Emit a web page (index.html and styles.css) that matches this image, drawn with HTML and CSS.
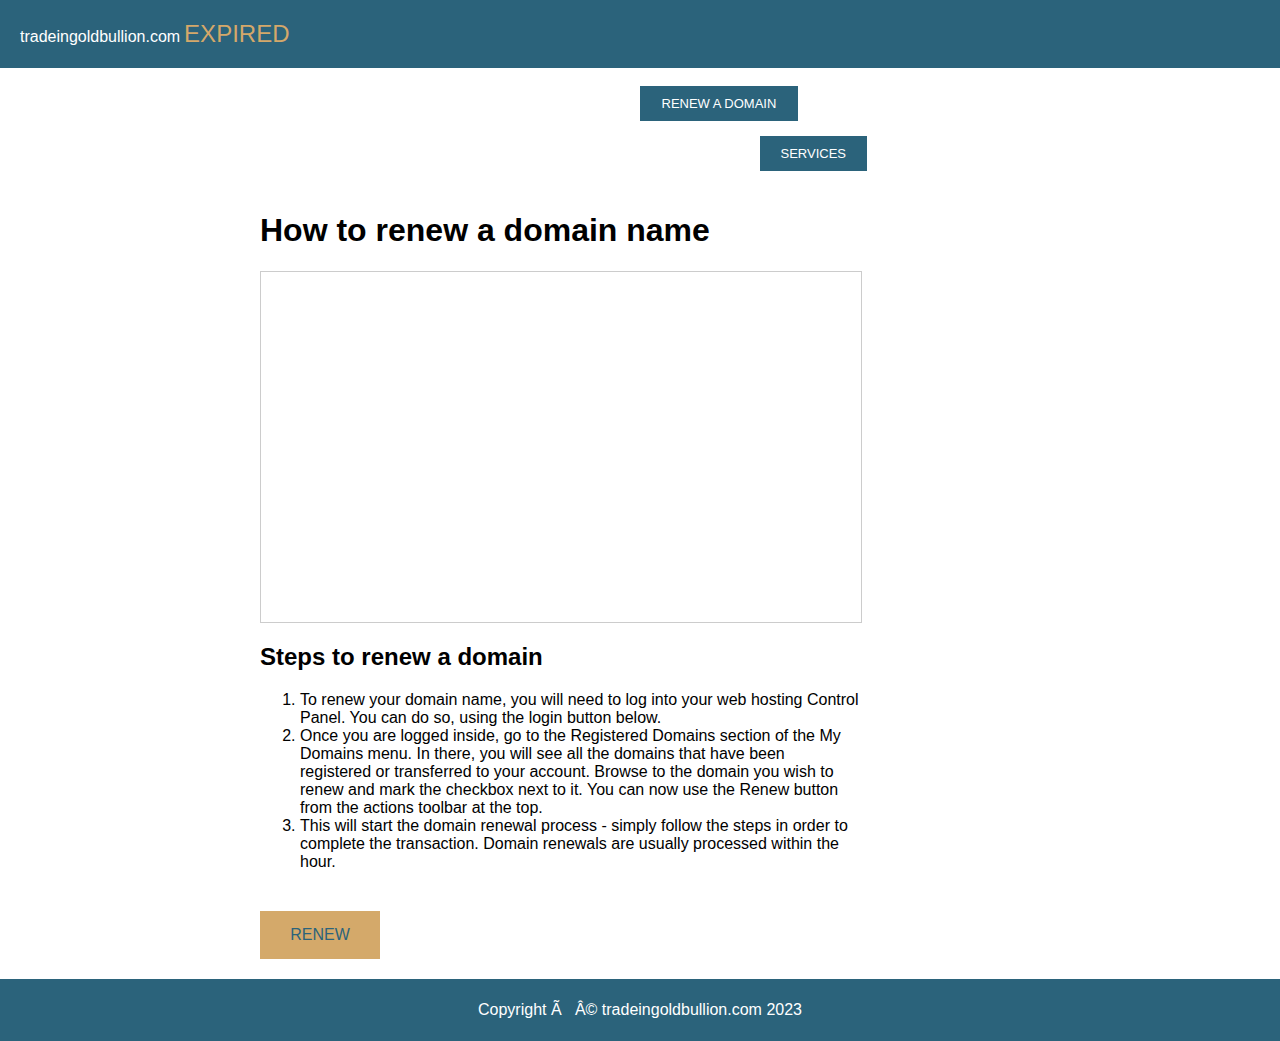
FILE: index.html
```html
<!DOCTYPE html>
<html lang="en">
<head>
<meta charset="utf-8">
<title>tradeingoldbullion.com EXPIRED</title>
<link rel="stylesheet" href="styles.css">
</head>
<body>
<header class="topbar">
  <span class="domain">tradeingoldbullion.com</span>
  <span class="status">EXPIRED</span>
</header>
<div class="page">
  <nav class="nav">
    <a class="nav-btn nav-renew" href="#">RENEW A DOMAIN</a>
    <a class="nav-btn nav-services" href="#">SERVICES</a>
  </nav>
  <main class="content">
    <h1 class="title">How to renew a domain name</h1>
    <div class="video"></div>
    <h2 class="subtitle">Steps to renew a domain</h2>
    <ol class="steps">
      <li>To renew your domain name, you will need to log into your web hosting Control Panel. You can do so, using the login button below.</li>
      <li>Once you are logged inside, go to the Registered Domains section of the My Domains menu. In there, you will see all the domains that have been registered or transferred to your account. Browse to the domain you wish to renew and mark the checkbox next to it. You can now use the Renew button from the actions toolbar at the top.</li>
      <li>This will start the domain renewal process - simply follow the steps in order to complete the transaction. Domain renewals are usually processed within the hour.</li>
    </ol>
    <a class="renew-btn" href="#">RENEW</a>
  </main>
</div>
<footer class="footer">Copyright Ã&nbsp;&nbsp; Â© tradeingoldbullion.com 2023</footer>
</body>
</html>
```
FILE: styles.css
```css
html, body {
  margin: 0;
  padding: 0;
  background: #ffffff;
  font-family: "Liberation Sans", Arial, sans-serif;
  color: #000;
}

.topbar {
  box-sizing: border-box;
  height: 68px;
  background: #2b637b;
  padding: 22px 20px 0;
  line-height: 1;
  display: flex;
  align-items: baseline;
  gap: 4px;
}

.domain {
  color: #ffffff;
  font-size: 16px;
}

.status {
  color: #d4a86a;
  font-size: 24px;
}

.page {
  width: 760px;
  margin: 0 auto;
}

.nav {
  display: flex;
  flex-direction: column;
  align-items: flex-start;
  gap: 15px;
  padding-top: 18px;
}

.nav-btn {
  display: block;
  background: #2b637b;
  color: #ffffff;
  font-size: 13px;
  line-height: 15px;
  padding: 10px 21.5px;
  text-decoration: none;
}

.nav-renew {
  margin-left: 380px;
}

.nav-services {
  margin-left: 500px;
  padding-left: 20.5px;
  padding-right: 20.5px;
}

.content {
  width: 600px;
}

.title {
  font-size: 32px;
  font-weight: bold;
  margin: 41px 0 22px;
}

.video {
  width: 600px;
  height: 350px;
  border: 1px solid #cccccc;
}

.subtitle {
  font-size: 24px;
  font-weight: bold;
  margin: 20px 0 20px;
}

.steps {
  margin: 0;
  padding-left: 40px;
  font-size: 16px;
}

.renew-btn {
  display: inline-block;
  margin-top: 40px;
  width: 120px;
  height: 48px;
  line-height: 48px;
  text-align: center;
  background: #d4a96a;
  color: #2b637b;
  font-size: 16px;
  text-decoration: none;
}

.footer {
  margin-top: 20px;
  height: 62px;
  background: #2b637b;
  color: #ffffff;
  font-size: 16px;
  display: flex;
  align-items: center;
  justify-content: center;
}
```
